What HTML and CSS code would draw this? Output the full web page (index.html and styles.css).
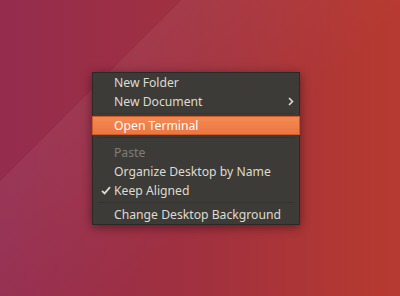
FILE: index.html
```html
<!DOCTYPE html>
<html lang="en">
<head>
    <meta charset="UTF-8">
    <title>Desktop context menu</title>
    <link rel="stylesheet" href="styles.css">
</head>
<body>
    <div class="desktop">
        <!-- right-click menu on the desktop -->
        <ul class="menu">
            <li class="item">New Folder</li>
            <li class="item">New Document
                <svg class="arrow" width="6" height="9" viewBox="0 0 6 9"><path d="M1 1 L4.5 4.5 L1 8" fill="none" stroke="#dfdbd2" stroke-width="1.6"/></svg>
            </li>
            <li class="sep"></li>
            <li class="item active">Open Terminal</li>
            <li class="sep sep-wide"></li>
            <li class="item disabled">Paste</li>
            <li class="item">Organize Desktop by Name</li>
            <li class="item">
                <svg class="check" width="10" height="9" viewBox="0 0 10 9"><path d="M1 4.8 L3.6 7.4 L9 1.2" fill="none" stroke="#dfdbd2" stroke-width="1.8"/></svg>
                Keep Aligned
            </li>
            <li class="sep"></li>
            <li class="item">Change Desktop Background</li>
        </ul>
    </div>
</body>
</html>
```

FILE: styles.css
```css
html, body {
    margin: 0;
    padding: 0;
}
.desktop {
    position: relative;
    width: 400px;
    height: 296px;
    overflow: hidden;
    background:
        linear-gradient(135deg, rgba(255,255,255,0) 0%, rgba(255,255,255,0) 26%, rgba(255,255,255,0.05) 26.2%, rgba(255,255,255,0) 60%),
        linear-gradient(to right, #942c4f 0%, #a1313f 50%, #b73a2f 100%);
    font-family: "Noto Sans", "Open Sans", sans-serif;
}
.menu {
    position: absolute;
    left: 92px;
    top: 72px;
    width: 206px;
    margin: 0;
    padding: 0;
    list-style: none;
    background-color: #3c3b37;
    border: 1px solid #2a2926;
    box-shadow: 0 2px 10px rgba(0, 0, 0, 0.45);
}
.item {
    position: relative;
    height: 19px;
    line-height: 19px;
    padding-left: 21px;
    font-size: 12.2px;
    color: #dfdbd2;
    white-space: nowrap;
}
.item.active {
    margin: 0 -1px;
    padding-left: 22px;
    background: linear-gradient(to bottom, #f38c55, #ec7440);
    color: #ffffff;
    box-shadow: inset 0 0 0 1px #cf5b25;
}
.item.disabled {
    color: #807e78;
}
.arrow {
    position: absolute;
    right: 5px;
    top: 5px;
}
.check {
    position: absolute;
    left: 8px;
    top: 5px;
}
.sep {
    height: 5px;
    position: relative;
}
.sep::after {
    content: "";
    position: absolute;
    left: 4px;
    right: 4px;
    top: 2px;
    border-top: 1px solid #34332f;
}
.sep-wide {
    height: 8px;
}
```
